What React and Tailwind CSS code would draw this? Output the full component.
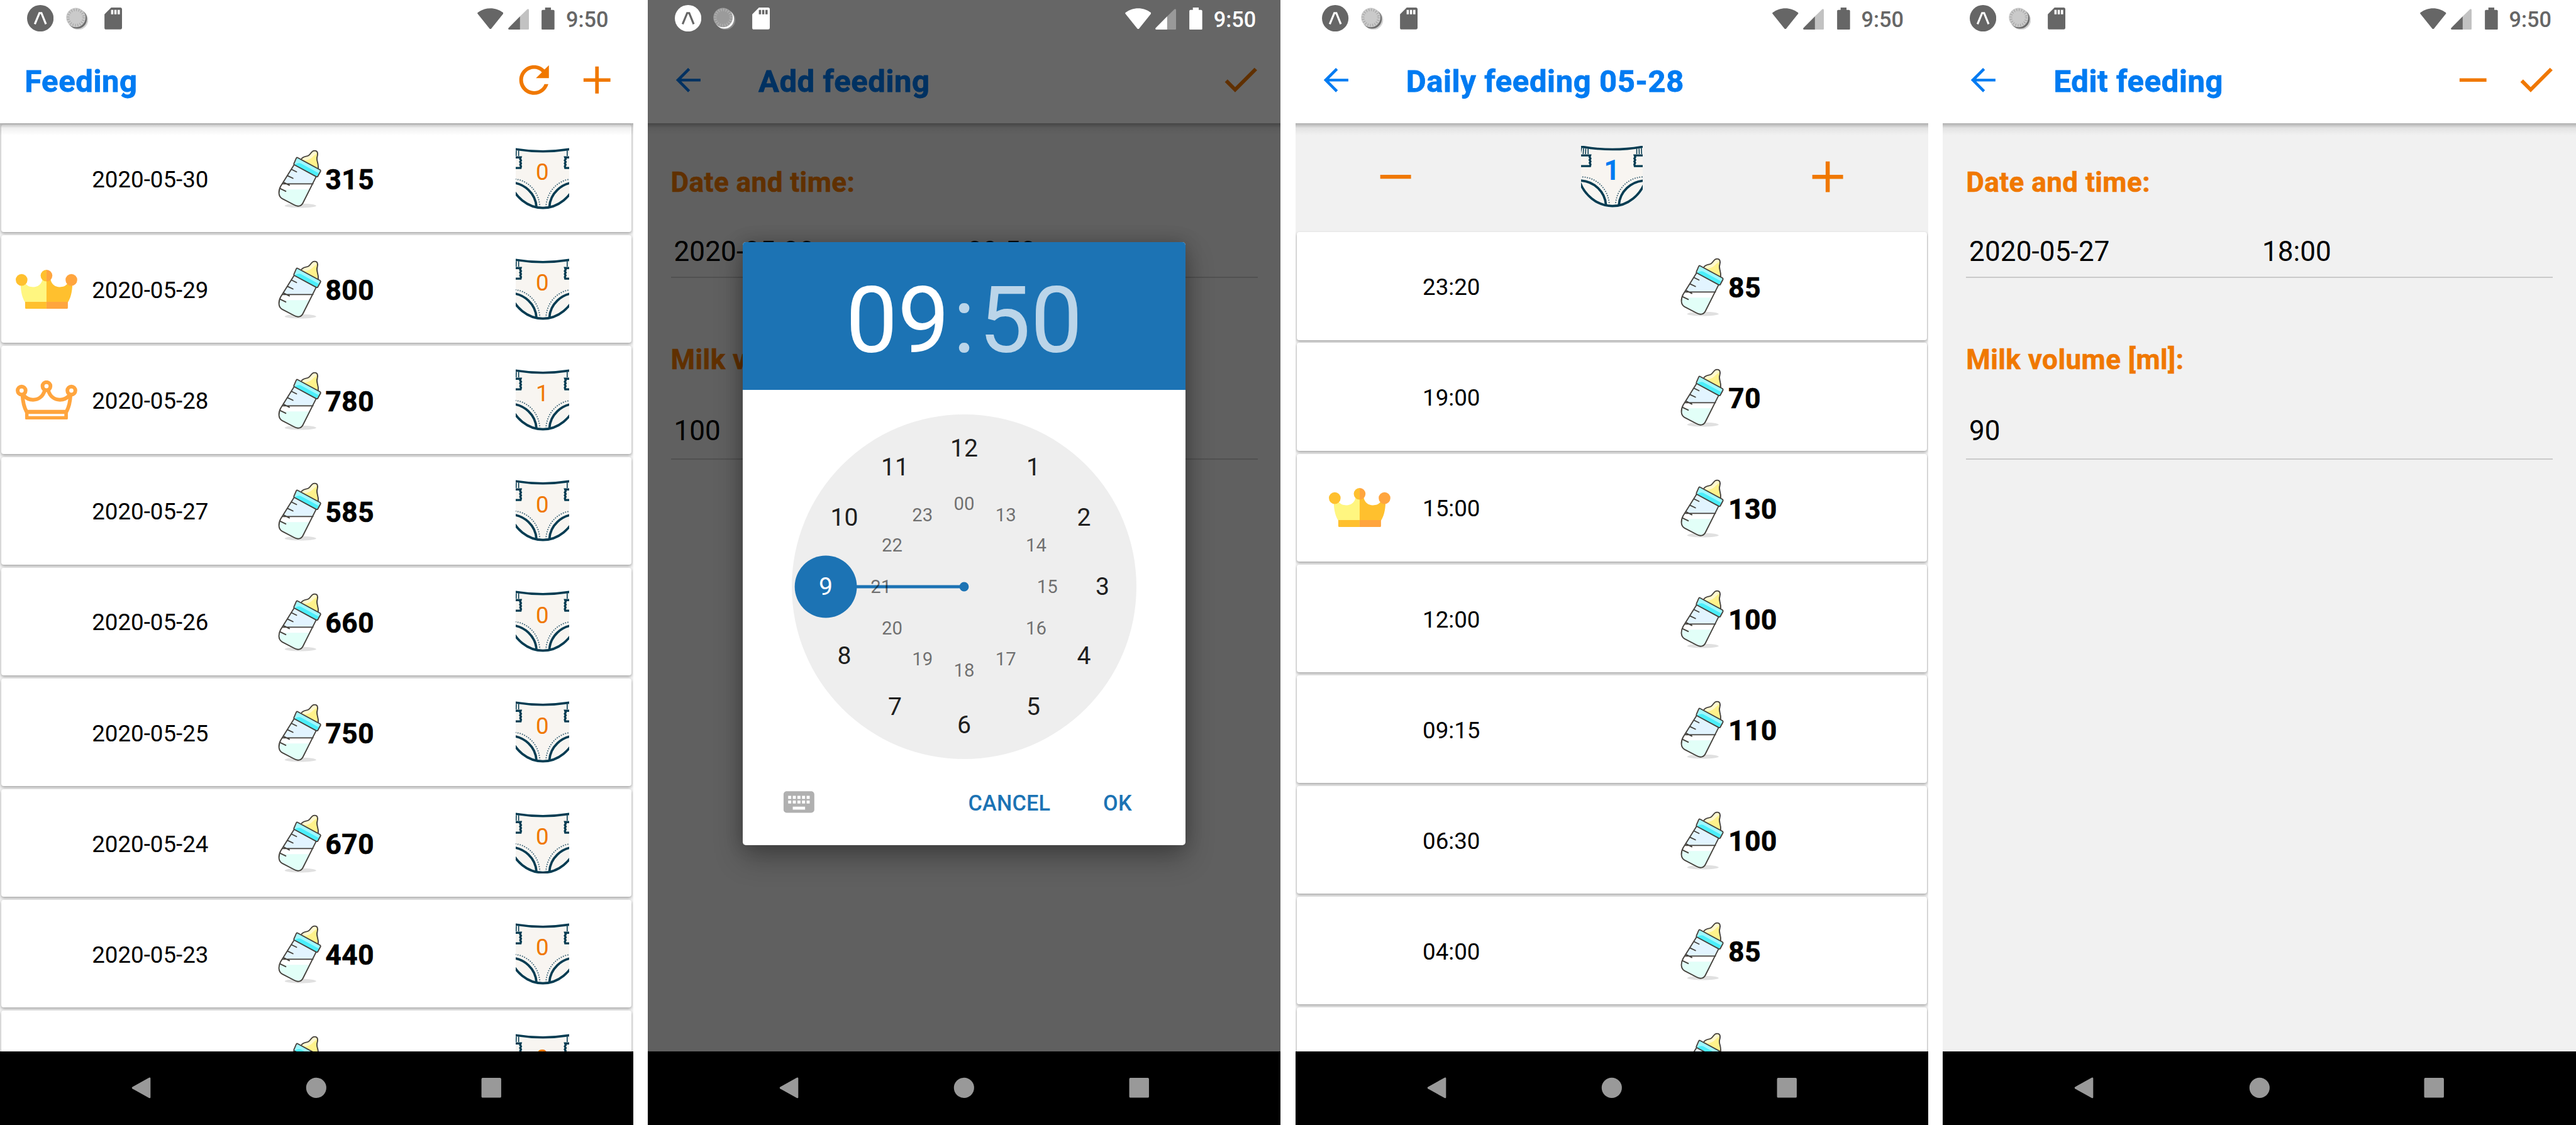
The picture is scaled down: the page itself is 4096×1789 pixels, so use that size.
import React from "react";

/* One spacing unit is one Android dp, so w-40 is 40dp and px-16 is 16dp. */

const ICON = {
  refresh:
    "M256 388c-72.597 0-132-59.405-132-132 0-72.601 59.403-132 132-132 36.3 0 69.299 15.4 92.406 39.601L278 234h154V80l-51.698 51.702C348.406 99.798 304.406 80 256 80c-96.797 0-176 79.203-176 176s78.094 176 176 176c81.045 0 148.287-54.134 169.401-128H378.85c-18.745 49.561-67.138 84-122.85 84z",
  add: "M416 277.333H277.333V416h-42.666V277.333H96v-42.666h138.667V96h42.666v138.667H416v42.666z",
  remove: "M96 235h320v42H96z",
  check:
    "M186.301 339.893L96 249.461l-32 30.507L186.301 402 448 140.506 416 110z",
};

function ActionIcon({ name, className = "size-28" }) {
  return (
    <svg viewBox="0 0 512 512" className={`shrink-0 fill-[#f07800] ${className}`}>
      <path d={ICON[name]} />
    </svg>
  );
}

function BackArrow() {
  return (
    <svg viewBox="0 0 24 24" className="size-24 shrink-0 fill-[#007bf2]">
      <path d="M20 11.1H7.5l5.7-5.7L11.9 4.1 4 12l7.9 7.9 1.3-1.3-5.7-5.7H20z" />
    </svg>
  );
}

function StatusBar({ light }) {
  const main = light ? "#ffffff" : "#666666";
  const knock = light ? "#666666" : "#ffffff";
  const faint = light ? "#999999" : "#c2c2c2";
  return (
    <div className="relative z-30 flex h-24 shrink-0 items-center pl-17.5 pr-16">
      <svg viewBox="0 0 45 45" className="size-17.25">
        <circle cx="22.5" cy="22.5" r="22.5" fill={main} />
        <path
          d="M13.2 32.5 L21 13.6 H24.4 L32 32.5"
          fill="none"
          stroke={knock}
          strokeWidth="3.4"
        />
      </svg>
      <svg viewBox="0 0 38 38" className="ml-8 size-14.5">
        <circle cx="21" cy="21" r="16.8" fill={light ? "#8a8a8a" : "#d2d2d2"} />
        <circle cx="19" cy="19.3" r="16.6" fill={light ? "#ffffff" : "#6c6c6c"} />
        <circle cx="16.8" cy="17" r="16.5" fill={light ? "#9b9b9b" : "#cacaca"} />
        <circle
          cx="16.8"
          cy="17"
          r="13.2"
          fill="none"
          stroke={light ? "#b5b5b5" : "#a6a6a6"}
          strokeWidth="4.6"
          strokeDasharray="1.3 2.847"
        />
      </svg>
      <svg viewBox="0 0 30 37.5" className="ml-10.75 h-14.25 w-11.5">
        <path
          d="M11.5 0H27.5A2.8 2.8 0 0 1 30 2.8V34.6A2.8 2.8 0 0 1 27.2 37.4H2.8A2.8 2.8 0 0 1 0 34.6V11.6Z"
          fill={main}
        />
        <path d="M11.3 4h3.8v7.6h-3.8zM16.9 4h3.8v7.6h-3.8zM22.5 4h3.8v7.6h-3.8z" fill={knock} />
      </svg>

      <div className="ml-auto flex items-center">
        <svg viewBox="0 0 45 36" className="h-13.75 w-17">
          <path
            d="M.6 9.6Q-.5 8.4 1 7.2C7 2.6 14.5 0 22.5 0S38 2.6 44 7.2Q45.5 8.4 44.4 9.6L24 35Q22.5 36.6 21 35Z"
            fill={main}
          />
        </svg>
        <svg viewBox="0 0 35 35" className="ml-3 mt-1 size-13.5">
          <path d="M20 12.8L32.2 .7Q34.8-.7 35 2V33.5Q35 35 33.5 35H20Z" fill={faint} />
          <path d="M20 12.8V35H1.5Q-.8 34.6.6 32.3Z" fill={main} />
        </svg>
        <svg viewBox="0 0 22 38" className="ml-8.5 h-14.5 w-8.5">
          <path
            d="M6 0H16V4H20Q22 4 22 6V36Q22 38 20 38H2Q0 38 0 36V6Q0 4 2 4H6Z"
            fill={main}
          />
        </svg>
        <span
          className={`ml-7.25 pt-[0.12em] text-[34.25px] leading-none font-medium ${light ? "text-white" : "text-[#666666]"}`}
        >
          9:50
        </span>
      </div>
    </div>
  );
}

function Header({ title, back, children, pad = "pr-11.75", gap = "gap-13.25" }) {
  return (
    <div
      className={`relative z-10 flex h-56 shrink-0 items-center bg-white ${back ? "pl-14.25" : "pl-16"} ${pad}`}
    >
      {back && <BackArrow />}
      <h1
        className={`${back ? "ml-33.75" : ""} pt-[0.12em] text-[48.93px] leading-none font-bold tracking-[0.013em] whitespace-nowrap text-[#007bf2] [-webkit-text-stroke:0.8px_currentColor]`}
      >
        {title}
      </h1>
      <div className={`ml-auto flex items-center ${gap}`}>{children}</div>
    </div>
  );
}

function NavBar() {
  return (
    <div className="relative z-30 flex h-48 shrink-0 items-center justify-between bg-black px-85">
      <svg viewBox="0 0 36 36" className="size-13.75 fill-[#999999]">
        <path d="M2.7 16.5L31 .8Q33.5-.2 33.5 2V34.2Q33.5 36.3 31 35.3L2.7 19.6Q.9 18 2.7 16.5Z" />
      </svg>
      <svg viewBox="0 0 36 36" className="size-13.75 fill-[#999999]">
        <circle cx="18" cy="18" r="17.2" />
      </svg>
      <svg viewBox="0 0 36 36" className="size-13.75 fill-[#999999]">
        <rect x="0.6" y="1.2" width="33.6" height="33.6" rx="2" />
      </svg>
    </div>
  );
}

function Phone({ light, header, overlay, children }) {
  return (
    <section className="relative flex h-full flex-col overflow-hidden bg-white">
      <StatusBar light={light} />
      {header}
      <div className="relative min-h-0 flex-1 overflow-hidden bg-[#f1f1f1]">
        <div className="pointer-events-none absolute inset-x-0 top-0 z-10 h-8 bg-linear-to-b from-black/28 via-black/6 via-40% to-transparent" />
        {children}
      </div>
      <NavBar />
      {overlay}
    </section>
  );
}

function Bottle() {
  return (
    <svg viewBox="0 0 84 100" className="h-38 w-32 shrink-0 overflow-visible">
      <ellipse cx="41.6" cy="97" rx="27" ry="3.6" fill="#e0e0e0" />
      <path
        d="M30.7 27L7.5 64C3.5 72 3.5 81 10.3 84.8L30.7 95.5C36 98.8 42.5 98.5 45.8 92.2L68.3 47.5Z"
        fill="#e2f4ff"
      />
      <path d="M11 59.5H63L59 69.5H5.5Z" fill="#ffffff" />
      <path
        d="M5.5 69.5H58.5L45.8 92.2C42.5 98.5 36 98.8 30.7 95.5L10.3 84.8C4.5 81 3.8 75 5.5 69.5Z"
        fill="#e2fff8"
      />
      <path
        d="M30.7 27L7.5 64C3.5 72 3.5 81 10.3 84.8L30.7 95.5C36 98.8 42.5 98.5 45.8 92.2L68.3 47.5M11.5 59.5H63M26.6 35L34.8 39M19.3 45.5L28.7 50M13.6 57.5L22.6 62M7.5 68L16.4 72.3"
        fill="none"
        stroke="#45413c"
        strokeWidth="2"
        strokeLinecap="round"
      />
      <path
        d="M43 17.2C47 11 52 13.5 55.5 11C60 8 60 2.8 65.8 2.8C71 2.8 71.5 7 70.5 12C67.5 20 73 22 71.9 33.5Z"
        fill="#fff28b"
      />
      <path
        d="M43 17.2C47 11 52 13.5 55.5 11C60 8 60 2.8 65.8 2.8C71 3 70 9 66.5 10C62 13 60 18 50 19.5Z"
        fill="#fff9cf"
      />
      <path
        d="M43 17.2C47 11 52 13.5 55.5 11C60 8 60 2.8 65.8 2.8C71 2.8 71.5 7 70.5 12C67.5 20 73 22 71.9 33.5"
        fill="none"
        stroke="#45413c"
        strokeWidth="2"
      />
      <path d="M36.8 14.8L76 36.5L69.5 47.5L30.7 26.8Z" fill="#4beffb" />
      <path d="M36.8 14.8L76 36.5L73 41.5L42 24.5Q38 22.5 32 26.5L30.7 26.8Z" fill="#a1f8fe" />
      <path
        d="M36.8 14.8L75 35.5Q76.5 36.8 75.8 38.2L71.2 46.8Q70 48 68.5 47.2L31.5 27.2Q29.8 26.2 30.5 24.5L34.5 15.5Q35.5 14 36.8 14.8Z"
        fill="none"
        stroke="#45413c"
        strokeWidth="2"
        strokeLinejoin="round"
      />
    </svg>
  );
}

function GoldCrown() {
  return (
    <svg viewBox="0 0 105 67" className="h-25.5 w-40">
      <path
        d="M8.3 25C8.6 38 11.5 49 16 55.5H53V16L45.5 17C43.5 25 38 29.5 30 29.5C24 29.5 20 28 17 24Z"
        fill="#fff680"
      />
      <path
        d="M96.7 25C96.4 38 93.5 49 89 55.5H52.5V16L59.5 17C61.5 25 67 29.5 75 29.5C81 29.5 85 28 88 24Z"
        fill="#ffc02e"
      />
      <circle cx="10" cy="17.3" r="10" fill="#ffc02e" />
      <circle cx="95" cy="17.3" r="10" fill="#ffa53e" />
      <path d="M52.5 0A10 10 0 0 0 52.5 20Z" fill="#ffc02e" />
      <path d="M52.5 0A10 10 0 0 1 52.5 20Z" fill="#ffa53e" />
      <path d="M16 54.8H52.5V67H18.5Q16 67 16 64.5Z" fill="#ffc02e" />
      <path d="M89 54.8H52.5V67H86.5Q89 67 89 64.5Z" fill="#ffa53e" />
    </svg>
  );
}

function OutlineCrown() {
  return (
    <svg viewBox="0 0 105 67" className="h-25.5 w-40" fill="none" stroke="#ffa53e">
      <g strokeWidth="6.4">
        <circle cx="10" cy="17.3" r="6.8" />
        <circle cx="95" cy="17.3" r="6.8" />
        <circle cx="52.5" cy="9.8" r="6.8" />
        <path d="M11.5 25C12 36 14.5 46 18.5 53.5M93.5 25C93 36 90.5 46 86.5 53.5" />
        <path d="M13 25C18 31 23 33 29.5 33C39 33 46.5 27 49.5 17M92 25C87 31 82 33 75.5 33C66 33 58.5 27 55.5 17" />
      </g>
      <path
        d="M16 50.3H89V64.5Q89 67 86.5 67H18.5Q16 67 16 64.5ZM21.8 57.2V61H83V57.2Z"
        fill="#ffa53e"
        fillRule="evenodd"
        stroke="none"
      />
    </svg>
  );
}

function DiaperShape({ viewBox }) {
  return (
    <svg viewBox={viewBox} className="block size-full" fill="none" stroke="#053c52">
      <path
        d="M-6 2Q53.5 10 113 2L111 58C103 84 79 102.5 53.5 102.5C28 102.5 4 84-4 58Z"
        fill="#f8f5f1"
        stroke="none"
      />
      <path d="M-1 .8L2.5 1.5Q53.5 10.5 104.5 1.5L108 .8" strokeWidth="3.8" />
      <g strokeWidth="1.7">
        <path d="M1 3L-1 14M4.2 3.5L3.6 14M8 4.5L7.7 14M12 4.5V14" />
        <path d="M106 3L108 14M102.8 3.5L103.4 14M99 4.5L99.3 14M95 4.5V14" />
      </g>
      <g strokeWidth="3.6">
        <path d="M-2 16.3H15.5L14.6 19L16 21.5L14.6 24L16 26.5L14.8 29L16 31.5L15.3 34.5H-2" />
        <path d="M109 16.3H91.5L92.4 19L91 21.5L92.4 24L91 26.5L92.2 29L91 31.5L91.7 34.5H109" />
      </g>
      <path d="M-4 56C4 84 28 102.7 53.5 102.7C79 102.7 103 84 111 56" strokeWidth="4" />
      <path d="M-2 59C22 60 41 78 42.5 101M109 59C85 60 66 78 64.5 101" strokeWidth="4" />
      <path
        d="M2 53C26 54 46 72 48.3 100M105 53C81 54 61 72 58.7 100"
        strokeWidth="1.9"
        strokeDasharray="1.9 2.1"
        stroke="#3f6577"
      />
    </svg>
  );
}

function Row({ children }) {
  return (
    <div className="pb-2">
      <div className="mx-1 flex h-70 items-center rounded-[4px] bg-white shadow-[0_2px_4px_rgba(0,0,0,0.33)]">
        {children}
      </div>
    </div>
  );
}

function Volume({ children }) {
  return (
    <div className="pt-[0.12em] pl-0.25 text-[44.04px] leading-none font-bold tracking-[0.014em] text-black [-webkit-text-stroke:0.7px_currentColor]">
      {children}
    </div>
  );
}

const days = [
  ["2020-05-30", 315, 0],
  ["2020-05-29", 800, 0, "gold"],
  ["2020-05-28", 780, 1, "outline"],
  ["2020-05-27", 585, 0],
  ["2020-05-26", 660, 0],
  ["2020-05-25", 750, 0],
  ["2020-05-24", 670, 0],
  ["2020-05-23", 440, 0],
  ["", "", 0],
];

const feeds = [
  ["23:20", 85],
  ["19:00", 70],
  ["15:00", 130, "gold"],
  ["12:00", 100],
  ["09:15", 110],
  ["06:30", 100],
  ["04:00", 85],
  ["", ""],
];

function FeedingList() {
  return (
    <Phone
      header={
        <Header title="Feeding" pad="pr-9.5" gap="gap-12.75">
          <ActionIcon name="refresh" />
          <ActionIcon name="add" />
        </Header>
      }
    >
      <div className="pt-1">
        {days.map(([date, volume, diapers, crown]) => (
          <Row key={date}>
            <div className="w-58.75 shrink-0 pl-9.25">
              {crown === "gold" && <GoldCrown />}
              {crown === "outline" && <OutlineCrown />}
            </div>
            <div className="w-119.5 shrink-0 pt-[0.14em] text-[36.7px] leading-none text-black">
              {date}
            </div>
            <Bottle />
            <div className="w-123.75 shrink-0">
              <Volume>{volume}</Volume>
            </div>
            <div className="relative h-40 w-35 shrink-0">
              <DiaperShape viewBox="7 0 92 105" />
              <div className="absolute inset-x-0 top-8.75 text-center text-[36.7px] leading-none text-[#f07800]">
                {diapers}
              </div>
            </div>
          </Row>
        ))}
      </div>
    </Phone>
  );
}

function DailyFeeding() {
  return (
    <Phone header={<Header back title="Daily feeding 05-28" />}>
      <div className="flex h-70 items-center justify-between px-49.25">
        <ActionIcon name="remove" className="size-32" />
        <div className="relative size-40 shrink-0">
          <DiaperShape viewBox="0 0 105 105" />
          <div className="absolute inset-x-0 top-7 text-center text-[44.04px] leading-none font-bold text-[#007bf2]">
            1
          </div>
        </div>
        <ActionIcon name="add" className="size-32" />
      </div>
      <div className="pt-1">
        {feeds.map(([time, volume, crown]) => (
          <Row key={time}>
            <div className="w-81.75 shrink-0 pl-21">{crown && <GoldCrown />}</div>
            <div className="w-166.5 shrink-0 pt-[0.14em] text-[36.7px] leading-none text-black">
              {time}
            </div>
            <Bottle />
            <Volume>{volume}</Volume>
          </Row>
        ))}
      </div>
    </Phone>
  );
}

function FieldLabel({ children }) {
  return (
    <div className="font-bold tracking-[0.01em] text-[#f07800] [-webkit-text-stroke:0.6px_currentColor]">
      {children}
    </div>
  );
}

function FeedingForm({ date, time, volume }) {
  return (
    <div className="px-15 pt-29.5 text-[44.04px] leading-none text-black">
      <FieldLabel>Date and time:</FieldLabel>
      <div className="mt-27 mb-44.25 flex border-b-[2.45px] border-[#cacaca] pb-7.25 pl-2">
        <span className="w-190.5 tracking-[0.003em]">{date}</span>
        <span>{time}</span>
      </div>
      <FieldLabel>Milk volume [ml]:</FieldLabel>
      <div className="mt-28.25 border-b-[2.45px] border-[#cacaca] pb-8.75 pl-2">{volume}</div>
    </div>
  );
}

function ClockFace() {
  const at = (i, r) => {
    const a = (i * Math.PI) / 6;
    return [294 + r * Math.sin(a), 294 - r * Math.cos(a)];
  };
  const outer = [12, 1, 2, 3, 4, 5, 6, 7, 8, 9, 10, 11];
  const inner = ["00", 13, 14, 15, 16, 17, 18, 19, 20, 21, 22, 23];
  return (
    <svg viewBox="0 0 588 588" className="mx-auto size-224">
      <circle cx="294" cy="294" r="294" fill="#eeeeee" />
      <path d="M58 294H294" stroke="#1c73b4" strokeWidth="5.2" />
      <circle cx="294" cy="294" r="8" fill="#1c73b4" />
      <circle cx="58" cy="294" r="53" fill="#1c73b4" />
      {outer.map((n, i) => {
        const [x, y] = at(i, 236);
        return (
          <text
            key={n}
            x={x}
            y={y + 14.4}
            textAnchor="middle"
            className={n === 9 ? "fill-white text-[42px]" : "fill-[#1f1f1f] text-[42px]"}
          >
            {n}
          </text>
        );
      })}
      {inner.map((n, i) => {
        const [x, y] = at(i, 142);
        return (
          <text
            key={n}
            x={x}
            y={y + 11}
            textAnchor="middle"
            className="fill-black/54 text-[31.5px]"
          >
            {n}
          </text>
        );
      })}
    </svg>
  );
}

function TimePicker() {
  return (
    <div className="absolute inset-x-0 top-0 bottom-48 z-20 flex items-center justify-center bg-black/60 pt-23.5">
      <div className="flex h-392.25 w-288 flex-col overflow-hidden rounded-[5px] bg-white shadow-[0_20px_45px_rgba(0,0,0,0.3),0_0_28px_rgba(0,0,0,0.2)]">
        <div className="flex h-96 shrink-0 items-center justify-center bg-[#1c73b4] pt-6.5 text-[146.8px] leading-none text-white">
          <span>09</span>
          <span className="mx-2.25 text-white/70">:</span>
          <span className="text-white/70">50</span>
        </div>
        <div className="pt-16">
          <ClockFace />
        </div>
        <div className="flex flex-1 items-center pr-35 pl-24.5 text-[34.25px] leading-none font-medium text-[#1c73b4]">
          <svg viewBox="0 0 24 24" className="size-24 fill-[#b0b0b0]">
            <path d="M20 5H4c-1.1 0-1.99.9-1.99 2L2 17c0 1.1.9 2 2 2h16c1.1 0 2-.9 2-2V7c0-1.1-.9-2-2-2zm-9 3h2v2h-2V8zm0 3h2v2h-2v-2zM8 8h2v2H8V8zm0 3h2v2H8v-2zm-1 2H5v-2h2v2zm0-3H5V8h2v2zm9 7H8v-2h8v2zm0-4h-2v-2h2v2zm0-3h-2V8h2v2zm3 3h-2v-2h2v2zm0-3h-2V8h2v2z" />
          </svg>
          <span className="ml-auto pt-[0.08em] tracking-[0.006em]">CANCEL</span>
          <span className="ml-34.25 pt-[0.08em] tracking-[0.006em]">OK</span>
        </div>
      </div>
    </div>
  );
}

function AddFeeding() {
  return (
    <Phone
      light
      header={
        <Header back title="Add feeding">
          <ActionIcon name="check" />
        </Header>
      }
      overlay={<TimePicker />}
    >
      <FeedingForm date="2020-05-30" time="09:50" volume="100" />
    </Phone>
  );
}

function EditFeeding() {
  return (
    <Phone
      header={
        <Header back title="Edit feeding">
          <ActionIcon name="remove" />
          <ActionIcon name="check" />
        </Header>
      }
    >
      <FeedingForm date="2020-05-27" time="18:00" volume="90" />
    </Phone>
  );
}

export default function App() {
  return (
    <main className="grid h-[1789px] w-[4096px] grid-cols-4 gap-[23.3px] overflow-hidden bg-white font-['Roboto',sans-serif] [--spacing:2.4464px]">
      <FeedingList />
      <AddFeeding />
      <DailyFeeding />
      <EditFeeding />
    </main>
  );
}
